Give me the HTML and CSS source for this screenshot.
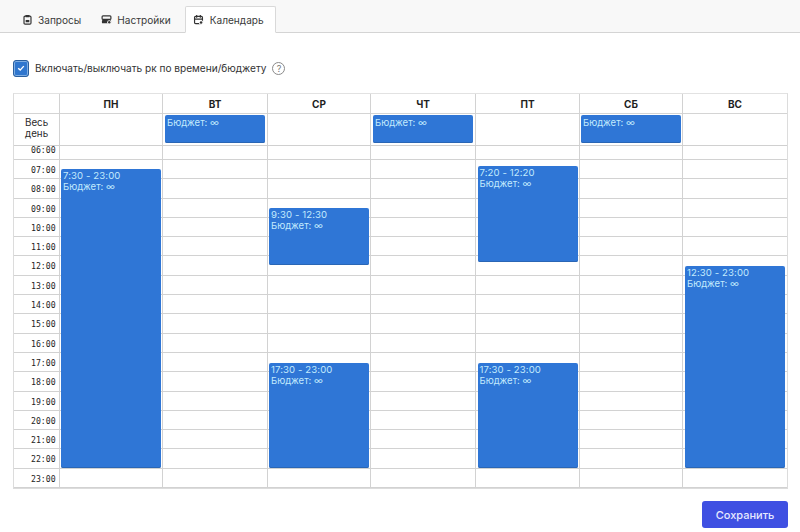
FILE: index.html
```html
<!DOCTYPE html>
<html>
<head>
    <meta charset="UTF-8">
    <meta name="viewport" content="width=device-width, initial-scale=1.0">
    <title>Календарь</title>
    <link rel="stylesheet" href="styles.css">
</head>
<body>
    <!-- вкладки -->
    <div class="tabs">
        <a class="tab">
            <svg class="tab-icon" viewBox="0 0 12 12"><rect x="2.200" y="2.400" width="7.600" height="8.600" rx="1.200" class="ring"/><rect x="3.800" y="1" width="4.400" height="2.600" rx=".6"/><path d="M4 6.500h4v2.500H4z"/></svg>
            Запросы
        </a>
        <a class="tab">
            <svg class="tab-icon" viewBox="0 0 12 12"><rect x="1.200" y="2" width="9.600" height="3.800" rx="1" class="ring"/><rect x="1" y="6.600" width="10" height="3.600" rx="1"/><circle cx="9" cy="9" r="2.300" class="cut"/><circle cx="9" cy="9" r="1.300"/></svg>
            Настройки
        </a>
        <a class="tab active">
            <svg class="tab-icon" viewBox="0 0 12 12"><rect x="1.700" y="2.500" width="8.600" height="8" rx="1.200" class="ring"/><path d="M4 1v3M8 1v3M2 5.500h8" class="ring"/><circle cx="8.800" cy="9.200" r="2.400" class="cut"/><circle cx="8.800" cy="9.200" r="1.400"/></svg>
            Календарь
        </a>
    </div>

    <div class="toggle">
        <span class="checkbox">
            <svg viewBox="0 0 10 10"><path d="M2.200 5.200l2 1.900 3.600-4"/></svg>
        </span>
        <span>Включать/выключать рк по времени/бюджету</span>
        <span class="help">?</span>
    </div>

    <div class="calendar">
        <!-- дни недели -->
        <div class="week head">
            <div></div>
            <div>ПН</div><div>ВТ</div><div>СР</div><div>ЧТ</div><div>ПТ</div><div>СБ</div><div>ВС</div>
        </div>
        <!-- весь день -->
        <div class="week all-day">
            <div class="all-day-label">Весь<br>день</div>
            <div></div>
            <div><div class="event">Бюджет: ∞</div></div>
            <div></div>
            <div><div class="event">Бюджет: ∞</div></div>
            <div></div>
            <div><div class="event">Бюджет: ∞</div></div>
            <div></div>
        </div>
        <!-- часы -->
        <div class="hours">
            <div class="hour first">06:00</div>
            <div class="hour">07:00</div>
            <div class="hour">08:00</div>
            <div class="hour">09:00</div>
            <div class="hour">10:00</div>
            <div class="hour">11:00</div>
            <div class="hour">12:00</div>
            <div class="hour">13:00</div>
            <div class="hour">14:00</div>
            <div class="hour">15:00</div>
            <div class="hour">16:00</div>
            <div class="hour">17:00</div>
            <div class="hour">18:00</div>
            <div class="hour">19:00</div>
            <div class="hour">20:00</div>
            <div class="hour">21:00</div>
            <div class="hour">22:00</div>
            <div class="hour">23:00</div>
            <!-- колонки и события поверх строк -->
            <div class="week columns">
                <div></div>
                <div>
                    <div class="event" style="top: 23px; height: 299px;"><b>7:30 - 23:00</b>Бюджет: ∞</div>
                </div>
                <div></div>
                <div>
                    <div class="event" style="top: 62px; height: 57px;"><b>9:30 - 12:30</b>Бюджет: ∞</div>
                    <div class="event" style="top: 217px; height: 105px;"><b>17:30 - 23:00</b>Бюджет: ∞</div>
                </div>
                <div></div>
                <div>
                    <div class="event" style="top: 20px; height: 96px;"><b>7:20 - 12:20</b>Бюджет: ∞</div>
                    <div class="event" style="top: 217px; height: 105px;"><b>17:30 - 23:00</b>Бюджет: ∞</div>
                </div>
                <div></div>
                <div>
                    <div class="event" style="top: 120px; height: 202px;"><b>12:30 - 23:00</b>Бюджет: ∞</div>
                </div>
            </div>
        </div>
    </div>

    <div class="actions">
        <button class="save">Сохранить</button>
    </div>
</body>
</html>
```

FILE: styles.css
```css
* {
    box-sizing: border-box;
}

body {
    margin: 0;
    background-color: #FFF;
    color: #2B2B2B;
    font-family: Inter, "Liberation Sans", sans-serif;
    font-size: 10.100px;
    overflow: hidden;
}

/* вкладки */

.tabs {
    display: flex;
    height: 33px;
    padding: 6px 0 0 12px;
    border-bottom: 1px solid #D4D4D4;
    background-color: #F8F8F8;
}
.tab {
    display: flex;
    align-items: center;
    gap: 5px;
    height: 27px;
    padding: 0 9px;
    color: #3A3A3A;
    border: 1px solid transparent;
}
.tab.active {
    gap: 6px;
    margin-left: 4px;
    padding: 0 11px 0 7px;
    border-color: #D9D9D9;
    border-bottom-color: #FFF;
    border-radius: 2px 2px 0 0;
    background-color: #FFF;
}
.tab-icon {
    width: 11px;
    height: 11px;
    fill: #333;
}
.tab-icon .ring {
    fill: none;
    stroke: #333;
    stroke-width: 1.300;
}
.tab-icon .cut {
    fill: #F8F8F8;
}
.tab.active .tab-icon .cut {
    fill: #FFF;
}

/* чекбокс */

.toggle {
    display: flex;
    align-items: center;
    gap: 6px;
    height: 18px;
    margin: 26px 0 16px 13px;
    color: #333;
}
.checkbox {
    display: flex;
    align-items: center;
    justify-content: center;
    width: 16px;
    height: 17px;
    border: 1px solid #2A5F9E;
    border-radius: 3px;
    background-color: #2F76CE;
    box-shadow: inset 0 0 0 1px #7FAEE3;
}
.checkbox svg {
    width: 10px;
    height: 10px;
    fill: none;
    stroke: #FFF;
    stroke-width: 1.400;
}
.help {
    width: 13px;
    height: 13px;
    border: 1px solid #8A8A8A;
    border-radius: 50%;
    color: #777;
    font-size: 9px;
    line-height: 11px;
    text-align: center;
}

/* календарь */

.calendar {
    width: 775px;
    margin-left: 13px;
    border: 1px solid #DCDCDC;
    border-top-color: #E2E2E2;
}
.week {
    display: grid;
    grid-template-columns: 45px 103px 105px 103px 105px 104px 103px 105px;
}
.week>div+div {
    border-left: 1px solid #D2D2D2;
}
.head {
    height: 20px;
    border-bottom: 1px solid #D4D4D4;
    font-size: 10px;
    font-weight: 700;
    line-height: 20px;
    text-align: center;
    color: #1F1F1F;
}
.all-day {
    height: 32px;
    border-bottom: 1px solid #D0D0D0;
}
.all-day>div {
    padding-top: 1px;
}
.all-day .event {
    height: 28px;
    margin: 0 auto;
    padding-top: 2px;
}
.all-day .all-day-label {
    padding: 4px 0 0 11px;
    font-size: 9.800px;
    line-height: 10.500px;
}

.hours {
    position: relative;
}
.hour {
    height: 19.300px;
    padding-top: 3px;
    border-bottom: 1px solid #D2D2D2;
    color: #222;
    font-family: "DejaVu Sans Mono", monospace;
    font-size: 8.200px;
    line-height: 14px;
    text-indent: 17px;
}
.hour.first {
    height: 14px;
    padding-top: 0;
    line-height: 9px;
}
.hour:last-of-type {
    border-bottom: 0;
}
.columns {
    position: absolute;
    top: 0;
    bottom: 0;
    left: 0;
    right: 0;
}
.columns>div {
    position: relative;
}

/* события */

.event {
    width: 100px;
    padding: 1px 2px;
    border-radius: 2px;
    background-color: #2F76D6;
    box-shadow: inset 0 -1px 0 #2A66B5;
    color: #C2EAFD;
    font-size: 9.500px;
    line-height: 11px;
}
.event b {
    display: block;
    font-size: 9.600px;
    font-weight: 400;
    letter-spacing: 0.1px;
    line-height: 11px;
}
.columns .event {
    position: absolute;
    left: 0;
    right: 0;
    margin: 0 auto;
}

/* сохранить */

.actions {
    display: flex;
    justify-content: flex-end;
    padding: 12px 12px 0 0;
}
.save {
    width: 86px;
    height: 27px;
    border: 0;
    border-radius: 3px;
    background-color: #3F50E2;
    color: #E6E9FF;
    font-family: Inter, "Liberation Sans", sans-serif;
    font-size: 11px;
    font-weight: 500;
}
```
